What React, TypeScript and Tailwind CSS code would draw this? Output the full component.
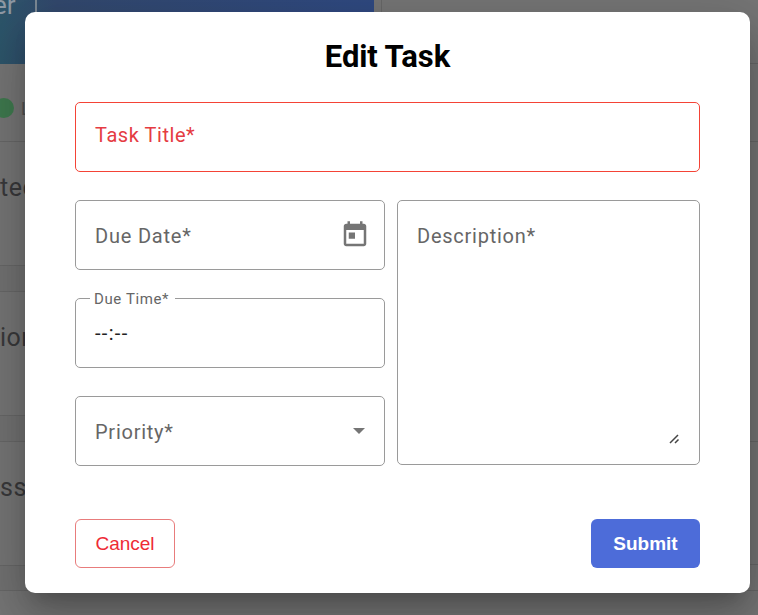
import React from "react";

const label = "text-[20px] leading-[24px] whitespace-nowrap";
const field = "rounded-[5px] border border-[#9a9a9a] text-[#666666]";

function Row({ text }: { text: string }) {
  return (
    <div className="flex h-[124px] items-center border-b border-[#686868] text-[25px] tracking-[0.5px] text-[#39393b]">
      <span className="-mt-[31px] whitespace-nowrap">{text}</span>
    </div>
  );
}

function Page() {
  return (
    <div className="flex h-[615px] w-[758px] bg-[#767676]">
      <div className="w-[374px] shrink-0">
        <div className="flex h-[64px] items-start bg-linear-to-r from-[#2d566b] via-[#33496e] via-15% to-[#304a82]">
          <span className="-mt-[11px] -ml-[7px] w-[24px] text-[26px] leading-[32px] text-[#8f9aa5]">er</span>
          <span className="ml-[18px] h-[12px] w-[2px] bg-[#7d8a96]" />
        </div>
        <div className="flex h-[78px] items-center gap-[7px] border-b border-[#686868] pt-[11px]">
          <span className="-ml-[6px] size-[20px] rounded-full bg-[#3f7a4f]" />
          <span className="text-[18px] text-[#505052]">Low</span>
        </div>
        <div className="w-[50px]">
          <Row text="ted" />
          <div className="h-[26px] border-b border-[#686868] bg-[#727272]" />
          <Row text="ion" />
          <div className="h-[26px] border-b border-[#686868] bg-[#727272]" />
          <Row text="ss" />
          <div className="h-[25px] border-b border-[#686868] bg-[#727272]" />
        </div>
      </div>
      <div className="ml-[7px] flex grow flex-col">
        <div className="h-[64px] border-b border-l border-[#686868]" />
        <div className="h-[78px] border-b border-[#686868]" />
        <div className="h-[300px] border-b border-[#686868]" />
        <div className="h-[123px] border-b border-[#686868]" />
        <div className="h-[26px] border-b border-[#686868]" />
      </div>
    </div>
  );
}

export default function App() {
  return (
    <div className="relative h-[615px] w-[758px] overflow-hidden font-[Roboto,sans-serif]">
      <Page />
      <div
        role="dialog"
        className="absolute top-[12px] left-[25px] flex h-[581px] w-[725px] flex-col rounded-[10px] bg-white px-[50px] pt-[28px] shadow-[0_14px_19px_-9px_rgba(0,0,0,0.2),0_30px_47px_4px_rgba(0,0,0,0.14),0_11px_57px_10px_rgba(0,0,0,0.12)]"
      >
        <h2 className="h-[62px] text-center text-[31px] leading-[34px] font-bold tracking-[-0.1px] text-black">Edit Task</h2>
        <div className="h-[70px] rounded-[5px] border border-[#f44336] pt-[20px] pl-[19px] text-[#e53b42]">
          <div className={`${label} tracking-[0.55px]`}>Task Title*</div>
        </div>
        <div className="mt-[28px] flex gap-[12px]">
          <div className="flex w-[310px] flex-col gap-[28px]">
            <div className={`${field} flex h-[70px] items-start justify-between pt-[23px] pr-[14px] pl-[19px]`}>
              <div className={`${label} tracking-[0.8px]`}>Due Date*</div>
              <svg className="-mt-[4px] size-[30px]" viewBox="0 0 24 24" fill="#757575">
                <path d="M19 3h-1V1h-2v2H8V1H6v2H5c-1.11 0-1.99.9-1.99 2L3 19c0 1.1.89 2 2 2h14c1.1 0 2-.9 2-2V5c0-1.1-.9-2-2-2zm0 16H5V8h14v11zM7 10h5v5H7z" />
              </svg>
            </div>
            <div className={`${field} relative h-[70px] pt-[22px] pl-[19px]`}>
              <span className="absolute -top-[9px] left-[14px] bg-white pr-[6px] pl-[4px] text-[15px] leading-[18px] tracking-[0.6px] whitespace-nowrap">Due Time*</span>
              <div className="text-[20px] leading-[24px] tracking-[1.3px] text-[#212121]">--:--</div>
            </div>
            <div className={`${field} flex h-[70px] items-start justify-between pt-[23px] pr-[19px] pl-[19px]`}>
              <div className={`${label} tracking-[0.75px]`}>Priority*</div>
              <svg className="mt-[8px] h-[6px] w-[12px]" viewBox="0 0 12 6" fill="#757575">
                <path d="M0 0h12L6 6z" />
              </svg>
            </div>
          </div>
          <div className={`${field} flex h-[265px] w-[303px] flex-col justify-between pt-[23px] pr-[19px] pb-[20px] pl-[19px]`}>
            <div className={`${label} tracking-[0.75px]`}>Description*</div>
            <svg className="size-[11px] self-end" viewBox="0 0 11 11" stroke="#444" strokeWidth="1.5" fill="none">
              <path d="M1 10L9 2M6 10L9.5 6.5" />
            </svg>
          </div>
        </div>
        <div className="mt-[53px] flex justify-between font-[Liberation_Sans,sans-serif] text-[19px]">
          <button className="h-[49px] w-[100px] rounded-[6px] border border-[#e87c7c] pt-[2px] text-[#ee2b34]">Cancel</button>
          <button className="h-[49px] w-[109px] rounded-[6px] bg-[#4d6cd9] pt-[2px] font-bold text-white">Submit</button>
        </div>
      </div>
    </div>
  );
}
